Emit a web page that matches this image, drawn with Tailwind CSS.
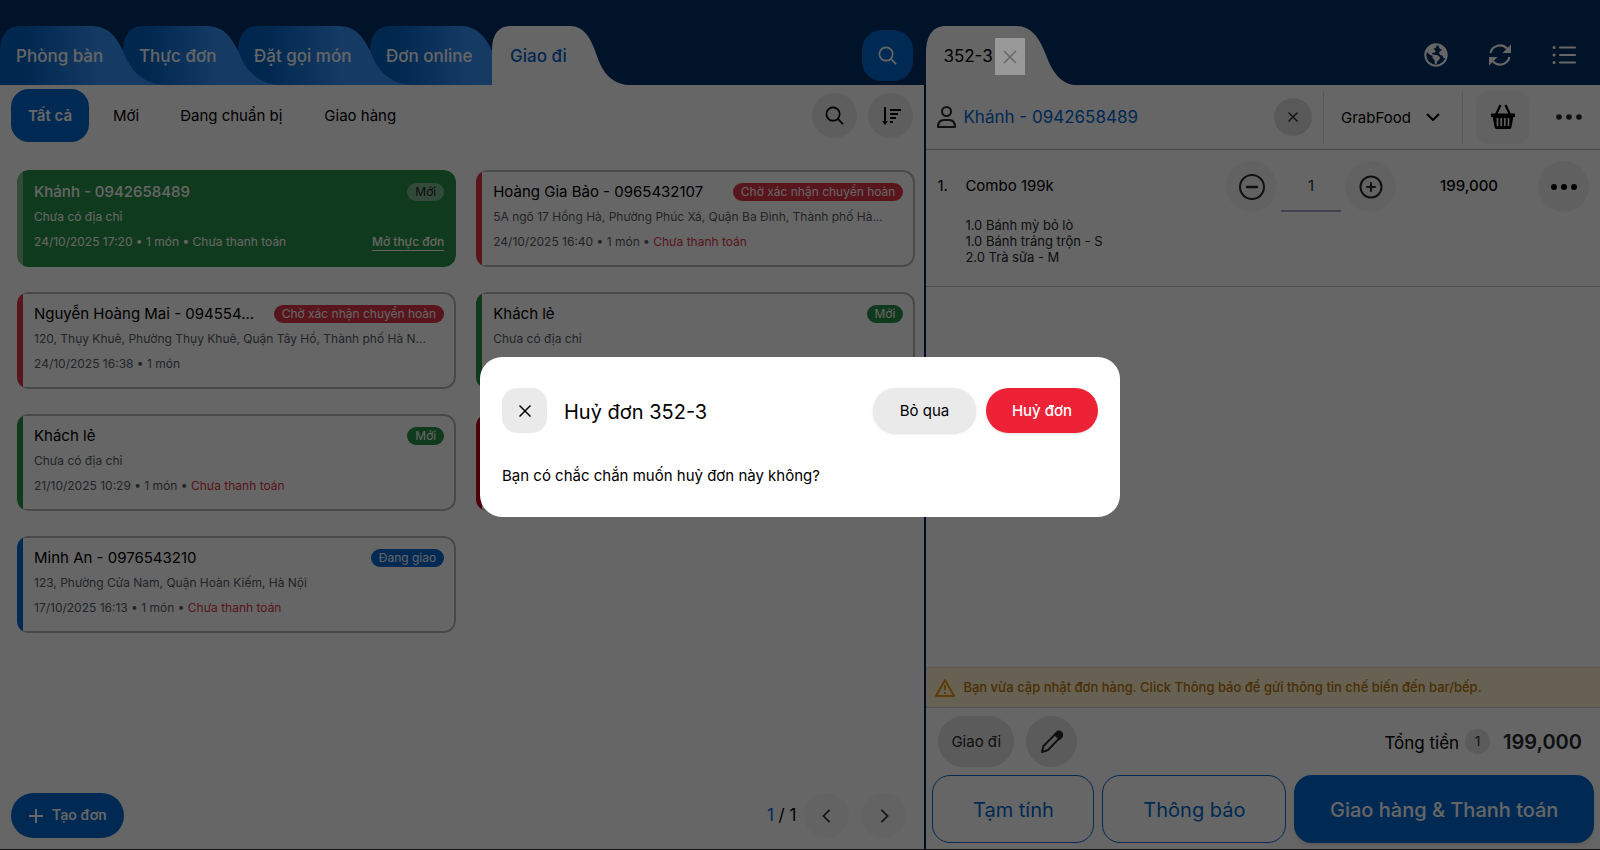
<!DOCTYPE html>
<html lang="vi">

<head>
    <meta charset="UTF-8">
    <meta name="viewport" content="width=device-width, initial-scale=1">
    <title>Giao đi - 352-3</title>
    <script src="https://cdn.jsdelivr.net/npm/@tailwindcss/browser@4"></script>
</head>

<body class="font-['Inter','Noto_Sans',sans-serif] text-[15px] text-black bg-white">
    <div class="flex min-h-screen border-b border-[#333]">

        <!-- Left: order list -->
        <section class="flex flex-1 min-w-0 flex-col border-r-2 border-[#00205c]">
            <header class="-mr-0.5 flex h-[85px] items-end justify-between bg-[#003064] pr-[13px]">
                <nav class="isolate flex h-[59px] text-[17px] font-medium text-white">
                    <svg width="0" height="0" class="absolute">
                        <linearGradient id="tab-fill">
                            <stop offset="0" stop-color="#0062c4" />
                            <stop offset="0.15" stop-color="#0062c4" />
                            <stop offset="0.6" stop-color="#3694fa" />
                            <stop offset="1" stop-color="#3694fa" />
                        </linearGradient>
                    </svg>
                    <a href="#" class="relative z-4 flex w-[123px] items-center pt-0.5 pl-4 whitespace-nowrap">
                        <svg class="absolute left-0 top-0 -z-1" width="164" height="59" fill="url(#tab-fill)"><path d="M0 59V28C0 9 7 0 20 0H92C110 0 118 14 124 27C130 43 141 57 164 59Z" /></svg>
                        Phòng bàn
                    </a>
                    <a href="#" class="relative z-3 flex w-[115px] items-center pt-0.5 pl-4 whitespace-nowrap">
                        <svg class="absolute left-0 top-0 -z-1" width="156" height="59" fill="url(#tab-fill)"><path d="M0 59V28C0 9 7 0 20 0H84C102 0 110 14 116 27C122 43 133 57 156 59Z" /></svg>
                        Thực đơn
                    </a>
                    <a href="#" class="relative z-2 flex w-[132px] items-center pt-0.5 pl-4 whitespace-nowrap">
                        <svg class="absolute left-0 top-0 -z-1" width="173" height="59" fill="url(#tab-fill)"><path d="M0 59V28C0 9 7 0 20 0H101C119 0 127 14 133 27C139 43 150 57 173 59Z" /></svg>
                        Đặt gọi món
                    </a>
                    <a href="#" class="relative z-1 flex w-[122px] items-center pt-0.5 pl-4 whitespace-nowrap">
                        <svg class="absolute left-0 top-0 -z-1" width="163" height="59" fill="url(#tab-fill)"><path d="M0 59V28C0 9 7 0 20 0H91C109 0 117 14 123 27C129 43 140 57 163 59Z" /></svg>
                        Đơn online
                    </a>
                    <a href="#" class="relative z-5 flex w-[100px] items-center pt-0.5 pl-[18px] whitespace-nowrap text-[#0064cc]">
                        <svg class="absolute left-0 top-0 -z-1" width="136" height="59" fill="#fff"><path d="M0 59V24C0 8 7 0 18 0H78C92 0 99 12 105 30C110 46 120 58 136 59Z" /></svg>
                        Giao đi
                    </a>
                </nav>
                <button type="button" aria-label="Tìm món" class="mb-1 flex size-[51px] items-center justify-center rounded-[20px] bg-[#0068d0] text-white">
                    <svg class="size-[19px]" viewBox="0 0 20 20" fill="none" stroke="currentColor" stroke-width="1.800"><circle cx="8.500" cy="8.500" r="7" /><path d="M13.500 13.500l5.500 5.500" /></svg>
                </button>
            </header>

            <div class="flex items-center gap-2 pt-1 pr-[11px] pl-[11px]">
                <button type="button" class="h-[53px] rounded-[18px] bg-[#0068d0] px-[17px] pt-0.5 font-semibold text-white">Tất cả</button>
                <button type="button" class="h-[53px] px-4 pt-0.5">Mới</button>
                <button type="button" class="h-[53px] px-[17px] pt-0.5">Đang chuẩn bị</button>
                <button type="button" class="h-[53px] px-[17px] pt-0.5">Giao hàng</button>
                <div class="ml-auto flex gap-[11px]">
                    <button type="button" aria-label="Tìm đơn" class="flex size-[45px] items-center justify-center rounded-full bg-[#eaeaea]">
                        <svg class="size-[19px]" viewBox="0 0 20 20" fill="none" stroke="currentColor" stroke-width="1.800"><circle cx="8.500" cy="8.500" r="7" /><path d="M13.500 13.500l5.500 5.500" /></svg>
                    </button>
                    <button type="button" aria-label="Sắp xếp" class="flex size-[45px] items-center justify-center rounded-full bg-[#eaeaea]">
                        <svg class="size-5" viewBox="0 0 20 20" fill="none" stroke="currentColor" stroke-width="2"><path d="M4 1v16M9 4h11M9 8h8M9 12h6M9 16h3" /><path d="M1 15h6l-3 4z" fill="currentColor" stroke="none" /></svg>
                    </button>
                </div>
            </div>

            <div class="mt-7 mr-[9px] ml-[17px] grid grid-cols-2 gap-x-5 gap-y-[25px] text-xs leading-[25px] text-[#555b63]">
                <article class="flex overflow-hidden rounded-[12px]">
                    <div class="w-1.5 bg-[#80b991]"></div>
                    <div class="min-w-0 flex-1 rounded-r-[12px] border-2 border-l-0 border-[#289249] bg-[#289249] pt-[7px] pr-2.5 pb-[11px] pl-[11px] text-white">
                        <div class="flex items-center gap-3">
                            <h3 class="min-w-0 flex-1 truncate text-[15px] leading-[25px] font-medium">Khánh - 0942658489</h3>
                            <span class="rounded-full bg-[#80b991] px-2 leading-[18px] text-[#222]">Mới</span>
                        </div>
                        <p>Chưa có địa chỉ</p>
                        <div class="flex justify-between">
                            <p>24/10/2025 17:20 • 1 món • Chưa thanh toán</p>
                            <a href="#" class="font-medium underline underline-offset-4">Mở thực đơn</a>
                        </div>
                    </div>
                </article>

                <article class="flex overflow-hidden rounded-[12px]">
                    <div class="w-1.5 bg-[#dc3545]"></div>
                    <div class="min-w-0 flex-1 rounded-r-[12px] border-2 border-l-0 border-[#b4b4b4] pt-[7px] pr-2.5 pb-[11px] pl-[11px]">
                        <div class="flex items-center gap-3">
                            <h3 class="min-w-0 flex-1 truncate text-[15px] leading-[25px] text-black">Hoàng Gia Bảo - 0965432107</h3>
                            <span class="rounded-full bg-[#dc3545] px-2 leading-[18px] text-white">Chờ xác nhận chuyển hoàn</span>
                        </div>
                        <p>5A ngõ 17 Hồng Hà, Phường Phúc Xá, Quận Ba Đình, Thành phố Hà...</p>
                        <p>24/10/2025 16:40 • 1 món • <span class="text-[#dc3545]">Chưa thanh toán</span></p>
                    </div>
                </article>

                <article class="flex overflow-hidden rounded-[12px]">
                    <div class="w-1.5 bg-[#dc3545]"></div>
                    <div class="min-w-0 flex-1 rounded-r-[12px] border-2 border-l-0 border-[#b4b4b4] pt-[7px] pr-2.5 pb-[11px] pl-[11px]">
                        <div class="flex items-center gap-3">
                            <h3 class="min-w-0 flex-1 truncate text-[15px] leading-[25px] text-black">Nguyễn Hoàng Mai - 094554...</h3>
                            <span class="rounded-full bg-[#dc3545] px-2 leading-[18px] text-white">Chờ xác nhận chuyển hoàn</span>
                        </div>
                        <p>120, Thụy Khuê, Phường Thụy Khuê, Quận Tây Hồ, Thành phố Hà N...</p>
                        <p>24/10/2025 16:38 • 1 món</p>
                    </div>
                </article>

                <article class="flex overflow-hidden rounded-[12px]">
                    <div class="w-1.5 bg-[#289249]"></div>
                    <div class="min-w-0 flex-1 rounded-r-[12px] border-2 border-l-0 border-[#b4b4b4] pt-[7px] pr-2.5 pb-[11px] pl-[11px]">
                        <div class="flex items-center gap-3">
                            <h3 class="min-w-0 flex-1 truncate text-[15px] leading-[25px] text-black">Khách lẻ</h3>
                            <span class="rounded-full bg-[#289249] px-2 leading-[18px] text-white">Mới</span>
                        </div>
                        <p>Chưa có địa chỉ</p>
                    </div>
                </article>

                <article class="flex overflow-hidden rounded-[12px]">
                    <div class="w-1.5 bg-[#289249]"></div>
                    <div class="min-w-0 flex-1 rounded-r-[12px] border-2 border-l-0 border-[#b4b4b4] pt-[7px] pr-2.5 pb-[11px] pl-[11px]">
                        <div class="flex items-center gap-3">
                            <h3 class="min-w-0 flex-1 truncate text-[15px] leading-[25px] text-black">Khách lẻ</h3>
                            <span class="rounded-full bg-[#289249] px-2 leading-[18px] text-white">Mới</span>
                        </div>
                        <p>Chưa có địa chỉ</p>
                        <p>21/10/2025 10:29 • 1 món • <span class="text-[#dc3545]">Chưa thanh toán</span></p>
                    </div>
                </article>

                <article class="flex overflow-hidden rounded-[12px]">
                    <div class="w-1.5 bg-[#c00018]"></div>
                    <div class="min-w-0 flex-1 rounded-r-[12px] border-2 border-l-0 border-[#b4b4b4]"></div>
                </article>

                <article class="flex overflow-hidden rounded-[12px]">
                    <div class="w-1.5 bg-[#0068d0]"></div>
                    <div class="min-w-0 flex-1 rounded-r-[12px] border-2 border-l-0 border-[#b4b4b4] pt-[7px] pr-2.5 pb-[11px] pl-[11px]">
                        <div class="flex items-center gap-3">
                            <h3 class="min-w-0 flex-1 truncate text-[15px] leading-[25px] text-black">Minh An - 0976543210</h3>
                            <span class="rounded-full bg-[#0068d0] px-2 leading-[18px] text-white">Đang giao</span>
                        </div>
                        <p>123, Phường Cửa Nam, Quận Hoàn Kiếm, Hà Nội</p>
                        <p>17/10/2025 16:13 • 1 món • <span class="text-[#dc3545]">Chưa thanh toán</span></p>
                    </div>
                </article>
            </div>

            <footer class="mt-auto flex items-center justify-between pr-[18px] pb-[11px] pl-[11px]">
                <button type="button" class="flex h-[45px] items-center gap-2 rounded-full bg-[#0068d0] px-[17px] font-['Roboto','Noto_Sans',sans-serif] font-medium text-white">
                    <svg class="size-4" viewBox="0 0 16 16" fill="none" stroke="currentColor" stroke-width="2"><path d="M8 1v14M1 8h14" /></svg>
                    Tạo đơn
                </button>
                <div class="flex items-center">
                    <span class="mr-2 text-[17px]"><span class="text-[#0068d0]">1</span> / 1</span>
                    <button type="button" aria-label="Trang trước" class="mr-3 flex size-[45px] items-center justify-center rounded-full bg-[#f8f8f8] text-[#333]">
                        <svg class="size-3.5" viewBox="0 0 16 16" fill="none" stroke="currentColor" stroke-width="2"><path d="M11 1L4 8l7 7" /></svg>
                    </button>
                    <button type="button" aria-label="Trang sau" class="flex size-[45px] items-center justify-center rounded-full bg-[#f8f8f8] text-[#333]">
                        <svg class="size-3.5" viewBox="0 0 16 16" fill="none" stroke="currentColor" stroke-width="2"><path d="M5 1l7 7-7 7" /></svg>
                    </button>
                </div>
            </footer>
        </section>

        <!-- Right: current order -->
        <section class="flex w-[42.1%] flex-col">
            <header class="flex h-[85px] items-end justify-between bg-[#003064] pr-6">
                <div class="relative flex h-[59px] items-center pt-0.5 pl-[17px] text-[17px]">
                    <svg class="absolute left-0 top-0" width="148" height="59" fill="#fff"><path d="M0 59V28C0 9 7 0 20 0H90C106 0 114 13 120 29C125 43 133 57 148 59Z" /></svg>
                    <span class="relative">352-3</span>
                    <button type="button" aria-label="Đóng 352-3" class="relative z-20 ml-0.5 flex h-[37px] w-[30px] items-center justify-center bg-[#999] text-[#63676c]">
                        <svg class="size-3.5" viewBox="0 0 14 14" fill="none" stroke="currentColor" stroke-width="1.500"><path d="M1 1l12 12M13 1L1 13" /></svg>
                    </button>
                </div>
                <div class="mb-[18px] flex gap-10 text-white">
                    <button type="button" aria-label="Ngôn ngữ">
                        <svg class="size-6" viewBox="0 0 24 24" fill="none"><circle cx="12" cy="12" r="10.700" stroke="currentColor" stroke-width="2" /><path fill="currentColor" d="M2 9L4 5L8 2L13 1.500L12 4.500L9.500 6L11.500 7.500L11 9.500L8 10L8.500 11.500L13 12L16 14L15.500 16.500L13.500 18L12.500 21H11L10.500 17L8.500 15L8.500 13L5.500 11.500L3 9ZM14.500 3.500L16 2.500L20 5L22.500 9L22.500 13L21 15.500L19.500 15L18.500 12.500L16 12L15 9.500L17 7.500L18.500 7L16 6Z" /></svg>
                    </button>
                    <button type="button" aria-label="Đồng bộ">
                        <svg class="size-6" viewBox="0 0 24 24" fill="none" stroke="currentColor" stroke-width="2.200"><path d="M2.500 10A9.700 9.700 0 0 1 19 5.500M21.500 14A9.700 9.700 0 0 1 5 18.500" /><path d="M23 1.500V10h-8.500zM1 22.500V14h8.500z" fill="currentColor" stroke="none" /></svg>
                    </button>
                    <button type="button" aria-label="Menu">
                        <svg class="size-6" viewBox="0 0 24 24" fill="none" stroke="currentColor" stroke-width="2.200" stroke-linecap="round"><path d="M8 4.500h15M8 12h15M8 19.500h15" /><path d="M2 4.500h.1M2 12h.1M2 19.500h.1" stroke-width="3" /></svg>
                    </button>
                </div>
            </header>

            <div class="flex h-[65px] items-center border-b border-[#b5b5b5] pr-[18px] pl-[11px]">
                <svg class="mr-[7px] h-[22px] w-[19px] shrink-0" viewBox="0 0 19 22" fill="none" stroke="#25282c" stroke-width="2"><circle cx="9.500" cy="5.500" r="4.500" /><path d="M1 21c0-5 2-7 6-7h5c4 0 6 2 6 7z" stroke-linejoin="round" /></svg>
                <a href="#" class="pt-0.5 text-[17px] text-[#0068d0]">Khánh - 0942658489</a>
                <button type="button" aria-label="Bỏ khách hàng" class="ml-auto flex size-[38px] items-center justify-center rounded-full bg-[#dedede] text-[#222]">
                    <svg class="size-2.5" viewBox="0 0 10 10" fill="none" stroke="currentColor" stroke-width="1.200"><path d="M.5.5l9 9M9.500.5l-9 9" /></svg>
                </button>
                <div class="relative ml-[11px] flex h-[53px] items-center border-x border-[#dedede]">
                    <label for="channel" class="sr-only">Kênh bán</label>
                    <select id="channel" class="h-full w-[138px] appearance-none bg-transparent pt-0.5 pl-[17px] text-[15px]">
                        <option>GrabFood</option>
                    </select>
                    <svg class="pointer-events-none absolute right-[22px] h-2 w-3.5" viewBox="0 0 14 8" fill="none" stroke="currentColor" stroke-width="2"><path d="M1 1l6 6 6-6" /></svg>
                </div>
                <button type="button" aria-label="Giỏ hàng" class="mx-[13px] flex size-[53px] items-center justify-center rounded-[12px] bg-[#f5f5f5]">
                    <svg class="size-[26px]" viewBox="0 0 26 26" fill="none" stroke="currentColor"><path d="M5.500 11.500L10.500 1M20.500 11.500L15.500 1" stroke-width="2.200" /><path d="M1 9.500h24v3.500h-24z" fill="currentColor" stroke="none" /><path d="M2.500 12h21l-2 11q-.3 2-2 2h-13q-1.700 0-2-2z" fill="currentColor" stroke="none" /><path d="M7.500 14v8M11.200 14v8M14.800 14v8M18.500 14v8" stroke="#f5f5f5" stroke-width="1.700" /></svg>
                </button>
                <button type="button" aria-label="Thêm" class="ml-3.5">
                    <svg class="h-1.5 w-[26px]" viewBox="0 0 26 6" fill="#25282c"><circle cx="3" cy="3" r="2.800" /><circle cx="13" cy="3" r="2.800" /><circle cx="23" cy="3" r="2.800" /></svg>
                </button>
            </div>

            <div class="border-b border-[#c6c6c6] pt-[11px] pr-[11px] pb-[21px] pl-[11px]">
                <div class="flex items-center">
                    <span class="w-7">1.</span>
                    <span>Combo 199k</span>
                    <button type="button" aria-label="Giảm" class="ml-auto flex size-[51px] items-center justify-center rounded-full bg-[#f5f5f5]">
                        <svg class="size-[26px]" viewBox="0 0 26 26" fill="none" stroke="#25282c" stroke-width="2"><circle cx="13" cy="13" r="12" /><path d="M8 13h10" stroke-width="2.500" stroke-linecap="round" /></svg>
                    </button>
                    <input type="text" value="1" aria-label="Số lượng" class="mx-1 h-[51px] w-[60px] border-b-2 border-[#a5a5bd] text-center text-[15px] text-[#333]">
                    <button type="button" aria-label="Tăng" class="flex size-[51px] items-center justify-center rounded-full bg-[#f5f5f5]">
                        <svg class="size-6" viewBox="0 0 24 24" fill="none" stroke="#25282c" stroke-width="2"><circle cx="12" cy="12" r="10.500" /><path d="M8 12h8M12 8v8" stroke-linecap="round" /></svg>
                    </button>
                    <span class="w-[102px] text-right font-medium">199,000</span>
                    <button type="button" aria-label="Tuỳ chọn món" class="ml-10 flex size-[51px] items-center justify-center rounded-full bg-[#f2f2f2]">
                        <svg class="h-1.5 w-[26px]" viewBox="0 0 26 6"><circle cx="3" cy="3" r="3" /><circle cx="13" cy="3" r="3" /><circle cx="23" cy="3" r="3" /></svg>
                    </button>
                </div>
                <ul class="mt-[5px] pl-7 text-[13px] leading-4 text-[#25282c]">
                    <li>1.0 Bánh mỳ bỏ lò</li>
                    <li>1.0 Bánh tráng trộn - S</li>
                    <li>2.0 Trà sữa - M</li>
                </ul>
            </div>

            <div class="mt-auto flex h-[41px] items-center gap-2 border-y border-y-[#f5e0a8] border-b-[#ccc] bg-[#fff3cd] pl-[9px] text-[13px] font-medium text-[#b87208]">
                <svg class="h-[18px] w-5 shrink-0" viewBox="0 0 20 18" fill="none" stroke="#e8950c" stroke-width="2" stroke-linejoin="round"><path d="M10 1L19 17H1z" /><path d="M10 6v5M10 13v2" /></svg>
                <p>Bạn vừa cập nhật đơn hàng. Click Thông báo để gửi thông tin chế biến đến bar/bếp.</p>
            </div>

            <div class="flex items-center pt-2 pr-[18px] pl-3">
                <button type="button" class="h-[51px] rounded-full bg-[#e3e3e3] px-[13px] pt-0.5 text-[#25282c]">Giao đi</button>
                <button type="button" aria-label="Ghi chú" class="ml-3 flex size-[51px] items-center justify-center rounded-full bg-[#e3e3e3]">
                    <svg class="size-6" viewBox="0 0 24 24" fill="none" stroke="#25282c" stroke-width="2" stroke-linejoin="round"><path d="M2 22l1.500-6L17 2.500q2-2 4 0t0 4L8 20z" /><path d="M15 4.500l2-2q2-1.500 4 .5t.5 4l-2 2z" fill="#25282c" /></svg>
                </button>
                <span class="mt-1 ml-auto text-[17px]">Tổng tiền</span>
                <span class="ml-1.5 flex size-[25px] items-center justify-center rounded-full bg-[#e3e3e3] text-[13px] text-[#25282c]">1</span>
                <span class="ml-[13px] text-xl font-semibold text-[#25282c]">199,000</span>
            </div>

            <div class="flex gap-2 px-1.5 pt-2 pb-1.5 text-xl">
                <button type="button" class="h-[68px] w-[162px] rounded-[18px] border border-[#0068d0] pt-0.5 text-[#0068d0]">Tạm tính</button>
                <button type="button" class="h-[68px] w-[184px] rounded-[18px] border border-[#0068d0] pt-0.5 text-[#0068d0]">Thông báo</button>
                <button type="button" class="h-[68px] flex-1 rounded-[18px] bg-[#0068d0] pt-0.5 font-medium text-white shadow-md">Giao hàng &amp; Thanh toán</button>
            </div>
        </section>
    </div>

    <!-- Cancel confirmation -->
    <div class="fixed inset-0 z-10 flex items-center justify-center bg-black/60 pt-6">
        <div role="dialog" aria-labelledby="dialog-title" class="w-[640px] rounded-[22px] bg-white px-[22px] pt-[31px] pb-[30px]">
            <div class="flex items-center">
                <button type="button" aria-label="Đóng" class="flex size-[45px] items-center justify-center rounded-[15px] bg-[#eaeaea]">
                    <svg class="size-3" viewBox="0 0 12 12" fill="none" stroke="currentColor" stroke-width="1.500"><path d="M.5.5l11 11M11.500.5l-11 11" /></svg>
                </button>
                <h2 id="dialog-title" class="ml-[17px] pt-0.5 text-xl">Huỷ đơn 352-3</h2>
                <button type="button" class="ml-auto h-[45px] w-[103px] rounded-full bg-[#eaeaea] pt-0.5 shadow-sm">Bỏ qua</button>
                <button type="button" class="ml-2.5 h-[45px] w-28 rounded-full bg-[#ed2236] pt-0.5 font-medium text-white shadow-sm">Huỷ đơn</button>
            </div>
            <p class="mt-8 leading-[22px]">Bạn có chắc chắn muốn huỷ đơn này không?</p>
        </div>
    </div>
</body>

</html>
